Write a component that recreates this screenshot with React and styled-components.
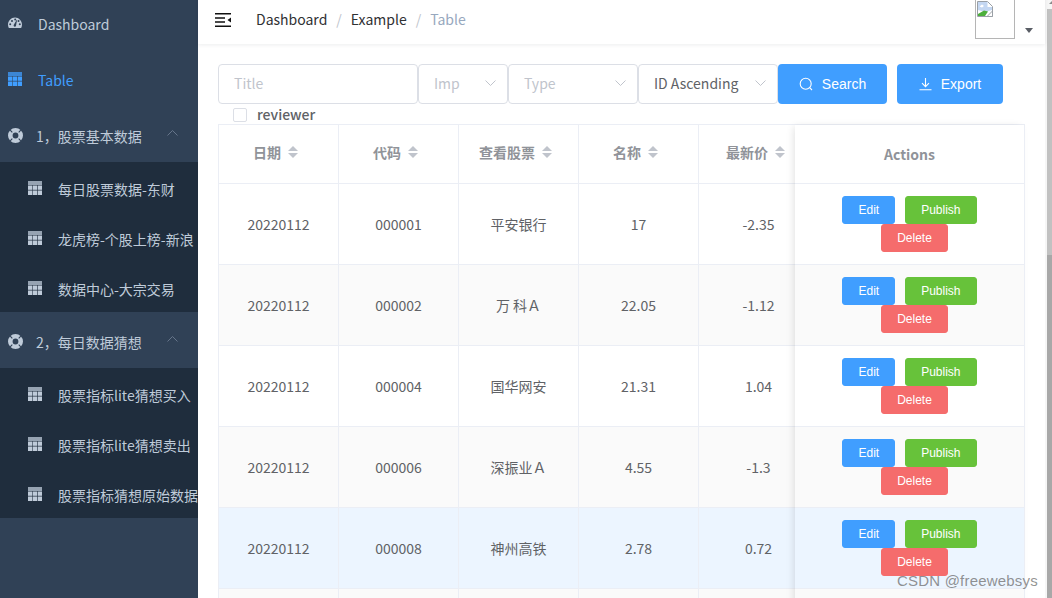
import React from "react"
import styled, { createGlobalStyle } from "styled-components"

const GlobalStyle = createGlobalStyle`
  html, body {
    margin: 0;
    padding: 0;
    height: 100%;
    overflow: hidden;
    background: #fff;
  }
  body {
    font-family: "Noto Sans CJK SC", "Noto Sans", sans-serif;
    font-size: 14px;
  }
`

const rows = [
  { date: "20220112", code: "000001", name: "平安银行", price: "17", change: "-2.35" },
  { date: "20220112", code: "000002", name: "万 科Ａ", price: "22.05", change: "-1.12" },
  { date: "20220112", code: "000004", name: "国华网安", price: "21.31", change: "1.04" },
  { date: "20220112", code: "000006", name: "深振业Ａ", price: "4.55", change: "-1.3" },
  { date: "20220112", code: "000008", name: "神州高铁", price: "2.78", change: "0.72", active: true },
  // next row only peeks in at the bottom edge, no text is visible yet
  { peek: true },
]

const columns = [
  ["日期", "date"],
  ["代码", "code"],
  ["查看股票", "name"],
  ["名称", "price"],
  ["最新价", "change"],
]

const groups = [
  {
    title: "1，股票基本数据",
    items: ["每日股票数据-东财", "龙虎榜-个股上榜-新浪", "数据中心-大宗交易"],
  },
  {
    title: "2，每日数据猜想",
    items: ["股票指标lite猜想买入", "股票指标lite猜想卖出", "股票指标猜想原始数据"],
  },
]

const GaugeIcon = () => (
  <svg width="14" height="14" viewBox="0 0 14 14">
    <path
      fill="currentColor"
      fillRule="evenodd"
      d="M7 1.4C3.1 1.4 0 4.700 0 8.600c0 1.100.2 2 .6 2.900.2.400.5.600.9.600h11c.4 0 .7-.2.9-.6.4-.9.6-1.800.6-2.900 0-3.900-3.100-7.200-7-7.200zM2.200 9.200a1 1 0 1 1 0-2 1 1 0 0 1 0 2zM4 6a1 1 0 1 1 0-2 1 1 0 0 1 0 2zm3.900 4.200a1.300 1.300 0 0 1-2.200-1.300L8.600 4.100c.2-.2.500 0 .4.200L7.900 10.200zM7.200 4.400a1 1 0 1 1 0-2 1 1 0 0 1 0 2zM11.800 9.200a1 1 0 1 1 0-2 1 1 0 0 1 0 2zM10.500 6a1 1 0 1 1 0-2 1 1 0 0 1 0 2z"
    />
  </svg>
)

const GridIcon = () => (
  <svg width="14" height="14" viewBox="0 0 14 14">
    <rect x="0" y="0" width="14" height="4" fill="currentColor" opacity="0.75" />
    <rect x="0" y="4.500" width="4.300" height="4.300" fill="currentColor" />
    <rect x="4.800" y="4.500" width="4.300" height="4.300" fill="currentColor" />
    <rect x="9.700" y="4.500" width="4.300" height="4.300" fill="currentColor" />
    <rect x="0" y="9.500" width="4.300" height="4.500" fill="currentColor" />
    <rect x="4.800" y="9.500" width="4.300" height="4.500" fill="currentColor" />
    <rect x="9.700" y="9.500" width="4.300" height="4.500" fill="currentColor" />
  </svg>
)

const RingIcon = () => (
  <svg width="15" height="15" viewBox="0 0 15 15">
    <circle cx="7.500" cy="7.500" r="5.200" fill="none" stroke="currentColor" strokeWidth="4.600" />
    <path d="M7.500 0v3M7.500 12v3M0 7.500h3M12 7.500h3" stroke="#304156" strokeWidth="1.100" transform="rotate(45 7.500 7.500)" />
  </svg>
)

const Chevron = ({ up }) => (
  <svg width="11" height="6" viewBox="0 0 11 6" style={{ transform: up ? "rotate(180deg)" : undefined }}>
    <path d="M.5.5 5.500 5.500 10.500.5" fill="none" stroke="currentColor" strokeWidth="1" />
  </svg>
)

const BrokenImage = () => (
  <svg width="16" height="16" viewBox="0 0 16 16">
    <path d="M.5.5h10l5 5v10H.5z" fill="#fff" stroke="#9aa0a6" />
    <path d="M1 1h9.500v5H15v3L8 11 1 9z" fill="#c4d7f2" />
    <path d="M2.500 5.500 5 3.500l2 1.500-2 1.500z" fill="#fff" />
    <path d="M1 13l6-3.500 4 1-3 4.500H1z" fill="#4caf3c" />
    <path d="M10 15.500 15.500 10v5.500z" fill="#fff" stroke="#9aa0a6" />
  </svg>
)

const Shell = styled.div`
  display: flex;
  width: 1052px;
  height: 598px;
  overflow: hidden;
  position: relative;
`

// window is scrolled down 6px in the reference
const Scrolled = styled.div`
  flex: 1;
  display: flex;
  min-width: 0;
  margin-top: -6px;
  height: 604px;
`

const Sidebar = styled.aside`
  width: 198px;
  flex: none;
  background: #304156;
  overflow: hidden;
  color: #bfcbd9;
`

const MenuItem = styled.div`
  display: flex;
  align-items: center;
  box-sizing: border-box;
  height: 56px;
  padding: 4px 0 0 8px;
  white-space: nowrap;
  color: ${(p) => (p.$active ? "#409eff" : "#bfcbd9")};
`

const MenuIcon = styled.span`
  display: flex;
  width: 14px;
  margin-right: 16px;
  position: relative;
  top: -1px;
`

const RingSlot = styled.span`
  display: flex;
  width: 15px;
  margin-right: 13px;
  position: relative;
  top: -1px;
`

const GroupLabel = styled.span`
  flex: 1;
`

const ChevronSlot = styled.span`
  display: flex;
  color: #66758a;
  margin-right: 20px;
  position: relative;
  top: -3px;
`

const SubMenu = styled.div`
  background: #1f2d3d;
`

const SubItem = styled.div`
  display: flex;
  align-items: center;
  box-sizing: border-box;
  height: 50px;
  padding: 4px 0 0 28px;
  white-space: nowrap;
`

const Main = styled.main`
  flex: 1;
  min-width: 0;
`

const Navbar = styled.header`
  height: 50px;
  display: flex;
  align-items: flex-start;
  box-shadow: 0 1px 4px rgba(0, 21, 41, 0.08);
  position: relative;
`

const Hamburger = styled.svg`
  margin: 19px 25px 0 17px;
  flex: none;
`

const Crumbs = styled.nav`
  flex: 1;
  display: flex;
  align-items: center;
  height: 50px;
  line-height: 50px;
`

const Crumb = styled.span`
  color: ${(p) => (p.$last ? "#97a8be" : "#303133")};
`

const CrumbSep = styled.span`
  color: #c0c4cc;
  margin: 0 9px;
`

const Avatar = styled.div`
  width: 40px;
  height: 40px;
  margin-top: 5px;
  padding: 1px;
  border: 1px solid #b5b5b5;
  box-sizing: border-box;
  line-height: 0;
`

const AvatarCaret = styled.span`
  width: 0;
  height: 0;
  margin: 34px 12px 0 10px;
  border-left: 4px solid transparent;
  border-right: 4px solid transparent;
  border-top: 5px solid #5a5e66;
`

const Content = styled.div`
  padding: 20px 20px 0 20px;
`

const FilterBar = styled.div`
  display: flex;
  height: 40px;
`

const Field = styled.div`
  width: ${(p) => p.$w}px;
  flex: none;
  height: 40px;
  box-sizing: border-box;
  display: flex;
  align-items: center;
  justify-content: space-between;
  padding: 0 15px 2px;
  background: #fff;
  border: 1px solid #dcdfe6;
  border-radius: 4px;
  color: ${(p) => (p.$filled ? "#606266" : "#c0c4cc")};
`

const FieldChevron = styled.span`
  display: flex;
  color: #c0c4cc;
  margin-right: -4px;
`

const FilterButton = styled.button`
  width: ${(p) => p.$w}px;
  height: 40px;
  flex: none;
  margin-left: ${(p) => p.$gap}px;
  border: 0;
  border-radius: 4px;
  background: #409eff;
  color: #fff;
  font-family: "Liberation Sans", Arial, sans-serif;
  font-size: 14px;
  display: flex;
  align-items: center;
  justify-content: center;
  gap: 9px;
  padding: 0;
`

const ReviewerRow = styled.label`
  display: flex;
  align-items: center;
  height: 20px;
  padding-left: 15px;
  color: #606266;
  line-height: 20px;
`

const Box = styled.span`
  width: 14px;
  height: 14px;
  box-sizing: border-box;
  border: 1px solid #dcdfe6;
  border-radius: 2px;
  background: #fff;
  margin-right: 10px;
  position: relative;
  top: 1px;
`

const ReviewerText = styled.span`
  font-weight: 500;
`

const Table = styled.div`
  display: flex;
  border-left: 1px solid #ebeef5;
  border-top: 1px solid #ebeef5;
`

const ScrollPane = styled.div`
  width: 576px;
  flex: none;
  overflow: hidden;
`

const FixedPane = styled.div`
  width: 230px;
  flex: none;
  position: relative;
  background: #fff;
  border-right: 1px solid #ebeef5;
  box-sizing: border-box;
  box-shadow: -3px 0 8px -2px rgba(0, 0, 0, 0.12);
`

const Row = styled.div`
  display: flex;
  width: ${(p) => (p.$wide ? "600px" : "auto")};
  height: ${(p) => (p.$head ? 58 : 80)}px;
  border-bottom: 1px solid #ebeef5;
  background: ${(p) => (p.$active ? "#ecf5ff" : p.$striped ? "#fafafa" : "#fff")};
`

const Cell = styled.div`
  width: 120px;
  flex: none;
  box-sizing: border-box;
  border-right: 1px solid #ebeef5;
  display: flex;
  align-items: center;
  justify-content: center;
  padding-bottom: ${(p) => (p.$head ? 5 : 0)}px;
  color: ${(p) => (p.$head ? "#909399" : "#606266")};
  font-weight: ${(p) => (p.$head ? 700 : 400)};
  white-space: nowrap;
`

const Sort = styled.span`
  display: inline-flex;
  flex-direction: column;
  gap: 2px;
  margin: 0 6px 0 7px;
`

const Caret = styled.i`
  width: 0;
  height: 0;
  border-left: 5px solid transparent;
  border-right: 5px solid transparent;
  ${(p) => (p.$up ? "border-bottom" : "border-top")}: 5px solid #c0c4cc;
`

const FixedHead = styled.div`
  width: 100%;
  display: flex;
  align-items: center;
  justify-content: center;
  color: #909399;
  font-weight: 700;
`

const Actions = styled.div`
  width: 100%;
  box-sizing: border-box;
  padding: 12px 10px;
  display: flex;
  flex-wrap: wrap;
  justify-content: center;
  align-content: flex-start;
`

const ActionButton = styled.button`
  height: 28px;
  box-sizing: border-box;
  padding: 0 15px;
  margin-left: ${(p) => (p.$first ? 0 : 10)}px;
  border: 1px solid ${(p) => p.$color};
  border-radius: 3px;
  background: ${(p) => p.$color};
  color: #fff;
  font-family: "Liberation Sans", Arial, sans-serif;
  font-size: 12px;
  line-height: 1;
`

const ScrollTrack = styled.div`
  width: 7px;
  flex: none;
  background: #f6f6f6;
  display: flex;
  flex-direction: column;
`

const TrackArrow = styled.div`
  height: 9px;
  flex: none;
  display: flex;
  justify-content: flex-end;
  align-items: flex-start;
  padding-top: 1px;
  box-sizing: border-box;
`

const ArrowHead = styled.i`
  width: 0;
  height: 0;
  border-left: 3px solid transparent;
  border-bottom: 3px solid #8a8a8a;
`

const ThumbLight = styled.div`
  height: 246px;
  flex: none;
  margin-left: 2px;
  background: #c1c1c1;
`

const ThumbDark = styled.div`
  flex: 1;
  margin-left: 2px;
  background: #a8a8a8;
`

const Watermark = styled.div`
  position: absolute;
  left: 897px;
  top: 572px;
  font-family: "Liberation Sans", Arial, sans-serif;
  font-size: 15px;
  letter-spacing: 0.200px;
  color: rgba(110, 110, 110, 0.75);
  white-space: nowrap;
`

const SearchIcon = () => (
  <svg width="14" height="14" viewBox="0 0 14 14" fill="none" stroke="#fff" strokeWidth="1.100">
    <circle cx="6.700" cy="6.700" r="5.500" />
    <path d="M10.700 10.700 13 13" />
  </svg>
)

const DownloadIcon = () => (
  <svg width="13" height="14" viewBox="0 0 13 14" fill="none" stroke="#fff" strokeWidth="1.100">
    <path d="M6.500 1v8.500M3 6.200l3.500 3.500L10 6.200M.5 12.800h12" />
  </svg>
)

const App = () => (
  <Shell>
    <GlobalStyle />
    <Scrolled>
      <Sidebar>
        <MenuItem>
          <MenuIcon>
            <GaugeIcon />
          </MenuIcon>
          Dashboard
        </MenuItem>
        <MenuItem $active>
          <MenuIcon>
            <GridIcon />
          </MenuIcon>
          Table
        </MenuItem>
        {groups.map((group) => (
          <div key={group.title}>
            <MenuItem>
              <RingSlot>
                <RingIcon />
              </RingSlot>
              <GroupLabel>{group.title}</GroupLabel>
              <ChevronSlot>
                <Chevron up />
              </ChevronSlot>
            </MenuItem>
            <SubMenu>
              {group.items.map((item) => (
                <SubItem key={item}>
                  <MenuIcon>
                    <GridIcon />
                  </MenuIcon>
                  {item}
                </SubItem>
              ))}
            </SubMenu>
          </div>
        ))}
      </Sidebar>
      <Main>
        <Navbar>
          <Hamburger width="16" height="14" viewBox="0 0 16 14">
            <path d="M0 .7h16M0 13.300h16M0 5h10M0 9h10" stroke="#111" strokeWidth="1.400" />
            <path d="M16 4.500v5l-3.500-2.500z" fill="#111" />
          </Hamburger>
          <Crumbs>
            <Crumb>Dashboard</Crumb>
            <CrumbSep>/</CrumbSep>
            <Crumb>Example</Crumb>
            <CrumbSep>/</CrumbSep>
            <Crumb $last>Table</Crumb>
          </Crumbs>
          <Avatar>
            <BrokenImage />
          </Avatar>
          <AvatarCaret />
        </Navbar>
        <Content>
          <FilterBar>
            <Field $w={200}>Title</Field>
            <Field $w={90}>
              Imp
              <FieldChevron>
                <Chevron />
              </FieldChevron>
            </Field>
            <Field $w={130}>
              Type
              <FieldChevron>
                <Chevron />
              </FieldChevron>
            </Field>
            <Field $w={140} $filled>
              ID Ascending
              <FieldChevron>
                <Chevron />
              </FieldChevron>
            </Field>
            <FilterButton $w={109} $gap={0}>
              <SearchIcon />
              Search
            </FilterButton>
            <FilterButton $w={106} $gap={10}>
              <DownloadIcon />
              Export
            </FilterButton>
          </FilterBar>
          <ReviewerRow>
            <Box />
            <ReviewerText>reviewer</ReviewerText>
          </ReviewerRow>
          <Table>
            <ScrollPane>
              <Row $head $wide>
                {columns.map(([label]) => (
                  <Cell key={label} $head>
                    {label}
                    <Sort>
                      <Caret $up />
                      <Caret />
                    </Sort>
                  </Cell>
                ))}
              </Row>
              {rows.map((row, i) => (
                <Row key={i} $wide $striped={i % 2 === 1} $active={row.active}>
                  {columns.map(([label, key]) => (
                    <Cell key={label}>{row[key]}</Cell>
                  ))}
                </Row>
              ))}
            </ScrollPane>
            <FixedPane>
              <Row $head>
                <FixedHead>Actions</FixedHead>
              </Row>
              {rows.map((row, i) => (
                <Row key={i} $striped={i % 2 === 1} $active={row.active}>
                  {!row.peek && (
                    <Actions>
                      <ActionButton $first $color="#409eff">Edit</ActionButton>
                      <ActionButton $color="#67c23a">Publish</ActionButton>
                      <ActionButton $color="#f56c6c">Delete</ActionButton>
                    </Actions>
                  )}
                </Row>
              ))}
            </FixedPane>
          </Table>
        </Content>
      </Main>
    </Scrolled>
    <ScrollTrack>
      <TrackArrow>
        <ArrowHead />
      </TrackArrow>
      <ThumbLight />
      <ThumbDark />
    </ScrollTrack>
    <Watermark>CSDN @freewebsys</Watermark>
  </Shell>
)

export default App
